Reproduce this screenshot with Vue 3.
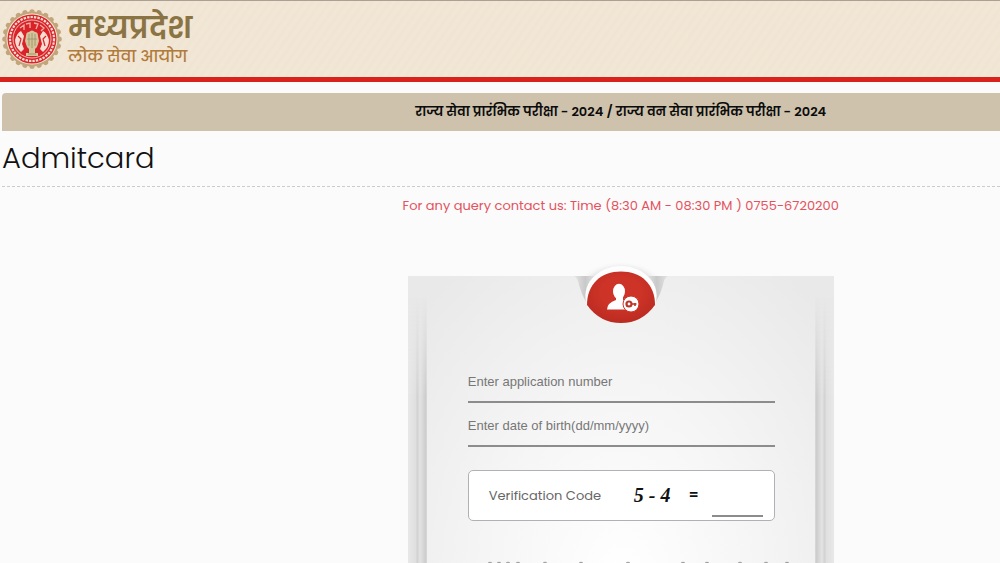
<script setup>
import { ref } from 'vue'

const applicationNumber = ref('')
const birthDate = ref('')
const answer = ref('')
const teeth = Array.from({ length: 24 }, (_, i) => i * 15)
const marks = [22, 31, 40, 50, 77, 113, 160, 215, 239, 272, 298, 319]
</script>

<template>
  <div class="page">
    <header class="masthead">
      <svg class="emblem" viewBox="0 0 60 60" role="img" aria-label="Emblem">
        <g fill="#c2a57b">
          <circle v-for="a in teeth" :key="a" cx="30" cy="2.8" r="2.6" :transform="`rotate(${a} 30 30)`" />
          <circle cx="30" cy="30" r="27.5" />
        </g>
        <circle cx="30" cy="30" r="25.5" fill="#f2e5d3" />
        <circle cx="30" cy="30" r="24.5" fill="#d9262c" />
        <circle cx="30" cy="30" r="22" fill="none" stroke="#f7dcd2" stroke-width="2.2" stroke-dasharray="2.4 1.1" />
        <circle cx="30" cy="30" r="19" fill="#db2229" stroke="#f6dfd4" stroke-width="0.8" />
        <path d="M18 19l4-3v5m2-6l4-1v5m4-5l4 1-2 5m4-4l4 3-3 3" fill="none" stroke="#efb2a5" stroke-width="1.3" />
        <path d="M13 31q2-7 6-9l3 5-2 8 2 5-3 3q-6-5-6-12zM47 31q-2-7-6-9l-3 5 2 8-2 5 3 3q6-5 6-12z" fill="#f6ded3" />
        <path d="M16 27l3 3-2 7M44 27l-3 3 2 7" fill="none" stroke="#d9262c" stroke-width="1.2" />
        <path d="M24 27q0-4 3-4 3-3 6 0 3 0 3 4l1 5-2 6-2 2v4h3v3H24v-3h3v-4l-2-2-2-6z" fill="#d2c49b" />
        <path d="M27 25v12M30 24v15M33 25v12M25 30h10M26 45h8" fill="none" stroke="#9d9062" stroke-width="0.8" />
      </svg>
      <div class="brand">
        <span class="brand-name">मध्यप्रदेश</span>
        <span class="brand-sub">लोक सेवा आयोग</span>
      </div>
    </header>

    <main class="content">
      <h2 class="exam-title">राज्य सेवा प्रारंभिक परीक्षा - 2024 / राज्य वन सेवा प्रारंभिक परीक्षा - 2024</h2>
      <h1 class="title">Admitcard</h1>
      <div class="entry">
        <p class="contact">For any query contact us: Time (8:30 AM - 08:30 PM ) 0755-6720200</p>

        <form class="card" @submit.prevent>
          <svg class="badge" viewBox="0 0 100 64" aria-hidden="true">
            <defs>
              <linearGradient id="notch" x1="0" y1="0" x2="1" y2="0">
                <stop offset="0" stop-color="#e4e4e4" />
                <stop offset="0.12" stop-color="#c9c9c9" />
                <stop offset="0.25" stop-color="#e8e8e8" />
                <stop offset="0.75" stop-color="#e8e8e8" />
                <stop offset="0.88" stop-color="#c9c9c9" />
                <stop offset="1" stop-color="#e4e4e4" />
              </linearGradient>
              <radialGradient id="glow">
                <stop offset="0.7" stop-color="#d8d8d8" />
                <stop offset="1" stop-color="#fbfbfb" stop-opacity="0" />
              </radialGradient>
              <radialGradient id="red" cx="0.5" cy="0.4" r="0.6">
                <stop offset="0.5" stop-color="#cd3327" />
                <stop offset="1" stop-color="#bb2b21" />
              </radialGradient>
              <clipPath id="above"><path d="M0 0H100V15H0z" /></clipPath>
            </defs>
            <path d="M3 15Q7 17 8 24Q13 43 26 53H74Q87 43 92 24Q93 17 97 15z" fill="url(#notch)" />
            <ellipse cx="50" cy="30" rx="46" ry="30" fill="url(#glow)" clip-path="url(#above)" />
            <path d="M17 47C7 24 27 5 50 5S93 24 83 47z" fill="#fdfdfd" />
            <path d="M16 44C16 23 30 10.500 50 10.500S84 23 84 44Q71 62 50 62T16 44z" fill="url(#red)" />
            <ellipse cx="48" cy="30.500" rx="6" ry="7.800" fill="#fff" />
            <path d="M36 48.500Q36 42 45 39v-4h7v4q7 2 8 9.500z" fill="#fff" />
            <circle cx="60" cy="43" r="8" fill="#fff" stroke="#cd3227" stroke-width="1" />
            <circle cx="58" cy="43" r="2.500" fill="none" stroke="#bd3429" stroke-width="2.200" />
            <path d="M60 43h5.500M64 42v3" fill="none" stroke="#bd3429" stroke-width="1.600" />
          </svg>
          <span class="edge edge-left"></span>
          <span class="edge edge-right"></span>

          <input v-model="applicationNumber" class="field" type="text" aria-label="Application number" placeholder="Enter application number" />
          <input v-model="birthDate" class="field" type="text" aria-label="Date of birth" placeholder="Enter date of birth(dd/mm/yyyy)" />

          <div class="captcha">
            <label class="captcha-label" for="code">Verification Code</label>
            <span class="sum">5 - 4</span>
            <span class="equals">=</span>
            <input id="code" v-model="answer" class="answer" type="text" />
          </div>

          <svg class="marks" viewBox="0 0 340 2" aria-hidden="true">
            <ellipse v-for="x in marks" :key="x" :cx="x" cy="2" rx="2" ry="1.2" fill="#a2a2a2" />
          </svg>
        </form>
      </div>
    </main>
  </div>
</template>

<style>
html,
body {
  background: #fbfbfb;
}

body {
  margin: 0;
}
</style>

<style scoped>
.page {
  display: flex;
  flex-direction: column;
  min-height: 100vh;
  font-family: Poppins, Inter, "Noto Sans", sans-serif;
  color: #111;
}

.masthead {
  box-sizing: border-box;
  height: 82px;
  display: flex;
  align-items: flex-start;
  gap: 6px;
  padding: 8px 2px 0;
  border-top: 1px solid #aaa195;
  border-bottom: 5px solid #d9221c;
  background: repeating-linear-gradient(125deg, #f2e6d6 0 2px, #f0e4d2 4px 5px, #f2e6d6 7px);
}

.emblem {
  width: 60px;
  height: 60px;
  flex: none;
}

.brand {
  display: flex;
  flex-direction: column;
  white-space: nowrap;
}

.brand-name {
  font-size: 30px;
  font-weight: 600;
  line-height: 38px;
  color: #8a7444;
}

.brand-sub {
  font-size: 16px;
  font-weight: 500;
  line-height: 20px;
  color: #b17b3b;
}

.content {
  flex: 1;
  display: flex;
  flex-direction: column;
  padding: 11px 0 0 2px;
}

.exam-title {
  margin: 0;
  padding-left: 24%;
  border-radius: 4px 0 0;
  background: #cec2ac;
  color: #0b0b0b;
  font-size: 13px;
  font-weight: 600;
  line-height: 38px;
  text-align: center;
}

.title {
  margin: 0;
  padding-bottom: 1px;
  border-bottom: 1px dashed #ccc;
  font-size: 29px;
  font-weight: 300;
  line-height: 54px;
}

.entry {
  flex: 1;
  display: flex;
  flex-direction: column;
  align-items: center;
  padding-left: 24%;
}

.contact {
  margin: 8px 0 0;
  color: #e4525d;
  font-size: 13px;
  line-height: 22px;
  text-align: center;
}

.card {
  flex: 1;
  position: relative;
  display: flex;
  flex-direction: column;
  box-sizing: border-box;
  width: 426px;
  max-width: 100%;
  margin-top: 59px;
  padding: 86px 59px 0 60px;
  background: radial-gradient(ellipse 280px 380px at 50% 300px, #fff 0, #f6f6f6 45%, #e9e9e9 100%);
}

.badge {
  position: absolute;
  top: -15px;
  left: 50%;
  width: 100px;
  height: 64px;
  margin-left: -50px;
}

.edge {
  position: absolute;
  top: 0;
  bottom: 0;
  width: 19px;
  background: linear-gradient(90deg, #e8e8e8 0, #dfdfdf 8px, #d0d0d0 9px, #e3e3e3 12px, #cbcbcb 18px, #e0e0e0 19px);
  mask-image: linear-gradient(transparent 20px, #000 120px);
}

.edge-left {
  left: 0;
}

.edge-right {
  right: 0;
  transform: scaleX(-1);
}

.field {
  display: block;
  box-sizing: border-box;
  width: 100%;
  height: 41px;
  margin: 0 0 3px;
  padding: 0;
  border: 0;
  border-bottom: 2px solid #8c8c8c;
  background: transparent;
  font: 13px "Liberation Sans", Arial, sans-serif;
  outline: 0;
}

.field::placeholder {
  color: #777;
  opacity: 1;
}

.captcha {
  display: flex;
  align-items: center;
  box-sizing: border-box;
  height: 51px;
  margin-top: 20px;
  padding: 0 11px 0 20px;
  border: 1px solid #b0b0b6;
  border-radius: 5px;
  background: #fff;
}

.captcha-label {
  color: #666;
  font-size: 13px;
  white-space: nowrap;
}

.sum {
  margin-left: auto;
  font: italic bold 20px "Liberation Serif", serif;
}

.equals {
  margin: 0 13px 0 18px;
  font-size: 14px;
  font-weight: 600;
}

.answer {
  align-self: flex-end;
  box-sizing: border-box;
  width: 51px;
  height: 32px;
  margin-bottom: 3px;
  padding: 0;
  border: 0;
  border-bottom: 2px solid #8c8c8c;
  background: transparent;
  font: 14px "Liberation Sans", Arial, sans-serif;
  outline: 0;
}

.marks {
  display: block;
  width: 340px;
  height: 2px;
  margin-top: auto;
}
</style>
